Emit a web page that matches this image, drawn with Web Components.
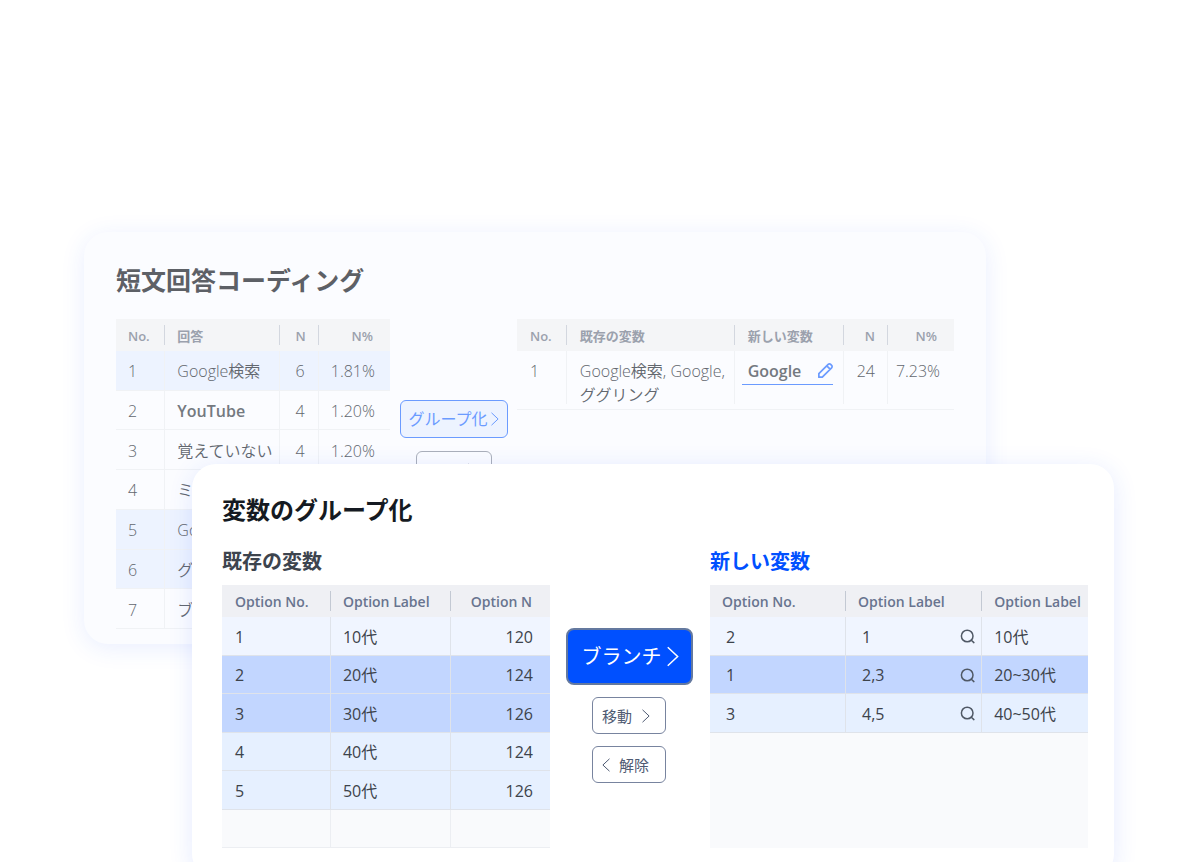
<!DOCTYPE html>
<html lang="ja">
<head>
<meta charset="utf-8">
<meta name="viewport" content="width=device-width, initial-scale=1">
<title>変数のグループ化</title>
<style>
  html, body { margin: 0; height: 100%; overflow: hidden; background: #fff; }
  body { font: 16px/24px "Open Sans", "Noto Sans CJK JP", sans-serif; color: #3d444d; }
</style>
</head>
<body>
<card-stage>
  <panel-card slot="back" class="back" heading="短文回答コーディング">
    <coding-columns>
      <answer-table slot="left"></answer-table>
      <button-stack slot="middle">
        <arrow-button kind="group" arrow="right">グループ化</arrow-button>
        <arrow-button kind="plain" arrow="right" label="移動"></arrow-button>
      </button-stack>
      <coded-table slot="right"></coded-table>
    </coding-columns>
  </panel-card>
  <panel-card slot="front" class="front" heading="変数のグループ化">
    <group-columns>
      <titled-section slot="left" heading="既存の変数"><source-table></source-table></titled-section>
      <button-stack slot="middle">
        <arrow-button kind="primary" arrow="right">ブランチ</arrow-button>
        <arrow-button kind="plain" arrow="right">移動</arrow-button>
        <arrow-button kind="plain" arrow="left">解除</arrow-button>
      </button-stack>
      <titled-section slot="right" class="accent" heading="新しい変数"><target-table></target-table></titled-section>
    </group-columns>
  </panel-card>
</card-stage>

<script>
class Base extends HTMLElement {
  connectedCallback() {
    if (this.shadowRoot) return;
    this.attachShadow({ mode: 'open' }).innerHTML = `<style>*{box-sizing:border-box}${this.css()}</style>${this.html()}`;
  }
  css() { return ':host{display:block}'; }
  html() { return '<slot></slot>'; }
}

// Two overlapping cards share one grid; the front one starts a column and a row later.
customElements.define('card-stage', class extends Base {
  css() { return `
    :host { display: grid; grid-template-columns: 7% 9% 1fr 128px 86px; grid-template-rows: 232px 232px 180px auto; }
    ::slotted([slot=back]) { grid-column: 2 / 4; grid-row: 2 / 4; }
    ::slotted([slot=front]) { grid-column: 3 / 5; grid-row: 3 / 5; }`; }
  html() { return '<slot name="back"></slot><slot name="front"></slot>'; }
});

customElements.define('panel-card', class extends Base {
  css() { return `
    :host { display: block; border-radius: 24px; box-sizing: border-box; min-width: 0; }
    :host(.back) { background: #fbfcff; padding: 30px 32px 14px; box-shadow: 0 4px 24px rgba(40,90,255,.1); color: #62676e;
      --title: #5d6066; --title-size: 25px; --title-gap: 21px; --head: #f4f5f7; --head-text: #9ba1ad; --tick: #d3d7df; --line: #f0f2f5; --head-size: 13px; --body-weight: 350; }
    :host(.front) { background: #fff; padding: 28px 26px 30px 30px; box-shadow: 0 4px 24px rgba(40,90,255,.12); position: relative; color: #3d434b;
      --title: #151a22; --title-size: 24px; --title-gap: 18px; --head: #eff0f4; --head-text: #68748f; --tick: #c3c9d3; --line: #dfe3ea; --head-size: 14px; --body-weight: 400; }
    h2 { margin: 0 0 var(--title-gap); font-size: var(--title-size); line-height: 36px; font-weight: 700; color: var(--title); }`; }
  html() { return `<h2>${this.getAttribute('heading')}</h2><slot></slot>`; }
});

class Columns extends Base {
  html() { return '<slot name="left"></slot><slot name="middle"></slot><slot name="right"></slot>'; }
}
customElements.define('coding-columns', class extends Columns {
  css() { return `:host { display: grid; grid-template-columns: 274fr 127fr 437fr; align-items: start; }
    ::slotted([slot=middle]) { padding-top: 81px; gap: 13px; }`; }
});
customElements.define('group-columns', class extends Columns {
  css() { return `:host { display: grid; grid-template-columns: 328fr 160fr 378fr; align-items: start; }
    ::slotted([slot=middle]) { padding: 82px 2px 0 0; gap: 12px; }`; }
});

customElements.define('titled-section', class extends Base {
  css() { return `:host { display: block; --h3: #3d444e; } :host(.accent) { --h3: #0050ff; }
    h3 { margin: 0 0 8px; padding-top: 1px; font-size: 20px; line-height: 30px; font-weight: 700; color: var(--h3); }`; }
  html() { return `<h3>${this.getAttribute('heading')}</h3><slot></slot>`; }
});

customElements.define('button-stack', class extends Base {
  css() { return ':host { display: flex; flex-direction: column; align-items: center; }'; }
});

customElements.define('arrow-button', class extends Base {
  css() { return `
    :host { display: block; }
    button { display: flex; align-items: center; justify-content: space-between; margin: 0; font: inherit; cursor: pointer; border: 1px solid; border-radius: 6px; height: 37px; }
    svg { display: block; fill: none; stroke: currentColor; flex: none; }
    .plain { width: 74px; padding: 0 15px 0 9px; background: #fff; border-color: #78849f; color: #4f5b73; font-size: 15px; }
    .plain.left { padding: 0 16px 0 9px; }
    .group { width: 108px; height: 38px; padding: 0 8px; background: #edf3ff; border-color: #6b9bff; color: #6b9bff; }
    .primary { width: 127px; height: 57px; padding: 0 12px 0 14px; background: #0050ff; border: 2px solid #64799f; border-radius: 8px; color: #fff; font-size: 20px; }
    .faint { width: 76px; background: #fbfcff; border-color: #abb0ba; color: #abb0ba; justify-content: flex-end; }`; }
  html() {
    const kind = this.getAttribute('kind'), left = this.getAttribute('arrow') === 'left', label = this.getAttribute('label');
    const d = left ? 'M7.5 .8.9 7l6.6 6.2' : 'M.5.8 7.1 7 .5 13.2';
    const s = kind === 'primary' ? [12, 21] : [8, 14];
    const icon = `<svg width="${s[0]}" height="${s[1]}" viewBox="0 0 8 14" aria-hidden="true"><path d="${d}"/></svg>`;
    return `<button type="button" class="${kind} ${left ? 'left' : ''} ${label ? 'faint' : ''}" ${label ? `aria-label="${label}"` : ''}>${left ? icon : ''}<span><slot></slot></span>${left ? '' : icon}</button>`;
  }
});

// Shared table look; subclasses give the columns and rows.
class DataTable extends Base {
  css() { return `
    :host { display: block; }
    table { width: 100%; table-layout: fixed; border-collapse: separate; border-spacing: 0; }
    th { height: 32px; padding: 2px 12px 0; font-size: var(--head-size); line-height: 20px; font-weight: 600; text-align: left; white-space: nowrap; color: var(--head-text); background: var(--head); }
    th:not(:last-child) { background: linear-gradient(var(--tick), var(--tick)) right center / 1px 20px no-repeat var(--head); }
    td { padding: 1px 12px 0; white-space: nowrap; font-weight: var(--body-weight); border-bottom: 1px solid var(--line); }
    td:not(:last-child) { border-right: 1px solid var(--line); }
    .n { text-align: right; }
    ${this.look()}`; }
  html() {
    const cols = this.cols().map(w => `<col style="width:${w}%">`).join('');
    const cls = i => this.right().includes(i) ? ' class="n"' : '';
    return `<table><colgroup>${cols}</colgroup><thead><tr>${this.heads().map((h, i) => `<th scope="col"${cls(i)}>${h}</th>`).join('')}</tr></thead>
      <tbody>${this.rows().map(([c, ...cells]) => `<tr class="${c}">${cells.map((t, i) => `<td${cls(i)}>${t}</td>`).join('')}</tr>`).join('')}</tbody></table>`;
  }
  look() { return ''; }
  right() { return []; }
}

customElements.define('answer-table', class extends DataTable {
  look() { return `table { height: 310px; } td { padding-top: 2px; } .on td { background: #edf3ff; } .strong td:nth-child(2) { font-weight: 600; color: #74797f; }
    .n { padding-right: 13px; } .n:last-child { padding-right: 17px; }`; }
  cols() { return [18, 42, 14, 26]; }
  right() { return [2, 3]; }
  heads() { return ['No.', '回答', 'N', 'N%']; }
  rows() { return [
    ['on', 1, 'Google検索', 6, '1.81%'], ['strong', 2, 'YouTube', 4, '1.20%'], ['', 3, '覚えていない', 4, '1.20%'],
    ['', 4, 'ミ', '', ''], ['on', 5, 'Go', '', ''], ['on', 6, 'グ', '', ''], ['', 7, 'ブ', '', '']]; }
});

customElements.define('coded-table', class extends DataTable {
  look() { return `td { height: 59px; padding-top: 8px; vertical-align: top; }
    td:not(:last-child) { border-right: 0; background: linear-gradient(var(--line), var(--line)) right top / 1px 53px no-repeat; }
    th, td { padding-left: 13px; }
    .n { padding-right: 13px; } td.n { padding-left: 0; } td.n:last-child { padding-right: 14px; } th.n:last-child { padding-right: 17px; }
    td:nth-child(3) { padding: 8px 11px 0 7px; }
    label { display: flex; align-items: center; height: 26px; padding: 0 0 2px 6px; border-bottom: 1px solid #6b9bff; }
    input { flex: 1; min-width: 0; height: 24px; padding: 0; border: 0; outline: 0; background: none; font: inherit; font-weight: 600; color: #74797f; }
    svg { flex: none; display: block; }`; }
  cols() { return [11.4, 38.4, 25.1, 10, 15.1]; }
  right() { return [3, 4]; }
  heads() { return ['No.', '既存の変数', '新しい変数', 'N', 'N%']; }
  rows() { return [['', 1, 'Google検索, Google,<br>ググリング',
    '<label><input type="text" value="Google" aria-label="新しい変数"><svg width="15" height="15" viewBox="0 0 14 14" fill="none" stroke="#6b9bff" stroke-width="1.6" stroke-linejoin="round" aria-hidden="true"><path d="M.8 13.2V10l8.7-8.7a1.6 1.6 0 0 1 2.3 0l.9.9a1.6 1.6 0 0 1 0 2.3L4 13.2ZM8.2 2.7l3.1 3.1"/></svg></label>',
    24, '7.23%']]; }
});

customElements.define('source-table', class extends DataTable {
  look() { return `td { height: 39px; } tr:nth-child(even) td { height: 38px; } td { background: #e6f0ff; } .first td { background: #f0f5ff; }
    .on td { background: #c2d6ff; } .empty td { background: #f9fafc; border-color: #eceef2; }
    th:first-child, td:first-child { padding-left: 13px; } th.n { padding-right: 18px; } td.n { padding-right: 17px; }`; }
  cols() { return [33.2, 36.6, 30.2]; }
  right() { return [2]; }
  heads() { return ['Option No.', 'Option Label', 'Option N']; }
  rows() { return [['first', 1, '10代', 120], ['on', 2, '20代', 124], ['on', 3, '30代', 126], ['', 4, '40代', 124], ['', 5, '50代', 126], ['empty', '', '', '']]; }
});

customElements.define('target-table', class extends DataTable {
  look() { return `:host { background: #f9fafc; min-height: 263px; } td { height: 39px; } tr:nth-child(even) td { height: 38px; }
    td { background: #e6f0ff; } .first td { background: #f0f5ff; } .on td { background: #c2d6ff; }
    td:first-child, td:nth-child(2) { padding-left: 16px; } td:nth-child(2) { padding-right: 6px; } th:last-child { padding-right: 0; }
    div { display: flex; align-items: center; justify-content: space-between; }
    button { display: block; margin: 0; padding: 0; border: 0; background: none; color: #4f5865; cursor: pointer; }
    svg { display: block; }`; }
  cols() { return [36, 36, 28]; }
  heads() { return ['Option No.', 'Option Label', 'Option Label']; }
  rows() {
    const find = t => `<div><span>${t}</span><button type="button" aria-label="検索"><svg width="15" height="15" viewBox="0 0 15 15" fill="none" stroke="currentColor" stroke-width="1.5" stroke-linecap="round"><circle cx="7.2" cy="7" r="5.8"/><path d="m11.3 11.2 2.6 2.4"/></svg></button></div>`;
    return [['first', 2, find('1'), '10代'], ['on', 1, find('2,3'), '20~30代'], ['', 3, find('4,5'), '40~50代']];
  }
});
</script>
</body>
</html>
